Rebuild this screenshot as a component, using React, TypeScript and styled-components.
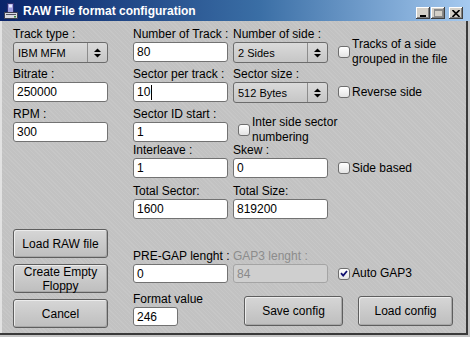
import React from "react";
import styled, { createGlobalStyle } from "styled-components";

const Global = createGlobalStyle`
  html, body { margin: 0; padding: 0; background: #c0c0c0; }
  body { font-family: "Liberation Sans", Arial, sans-serif; }
`;

const Window = styled.div`
  width: 470px;
  height: 337px;
  box-sizing: border-box;
  display: flex;
  flex-direction: column;
  overflow: hidden;
  background-color: #c2c2c2;
  background-image: repeating-linear-gradient(
    45deg,
    rgba(255, 255, 255, 0.08) 0 1px,
    transparent 1px 3px
  );
  box-shadow: inset -2px -2px 0 #c4c4c4, inset -4px -4px 0 #3a3a3a,
    inset 2px 0 0 #e2e2e2;
`;

const TitleBar = styled.div`
  flex: none;
  height: 21px;
  display: flex;
  align-items: center;
  padding: 0 7px 0 3px;
  background: linear-gradient(to right, #0a246a 0%, #3a6ea5 55%, #a6caf0 100%);
`;

const TitleText = styled.span`
  flex: 1;
  margin-left: 4px;
  color: #fff;
  font-weight: bold;
  font-size: 12px;
  white-space: nowrap;
`;

const CaptionButtons = styled.div`
  display: flex;
  align-self: flex-end;
  margin-bottom: 2px;
`;

const CaptionButton = styled.div<{ $gap?: number }>`
  width: 14px;
  height: 12px;
  margin-left: ${(p) => p.$gap ?? 1}px;
  background: #d4d0c8;
  box-shadow: inset -1px -1px 0 #404040, inset 1px 1px 0 #ffffff,
    inset -2px -2px 0 #808080;
  display: flex;
  align-items: center;
  justify-content: center;
`;

const Body = styled.div`
  flex: 1;
  display: flex;
  flex-direction: column;
  padding: 7px 0 0 13px;
`;

const TopGrid = styled.div`
  display: grid;
  grid-template-columns: 95px 25px 95px 5px 95px 10px 1fr;
  grid-template-rows: 40px 40px 36px 41px 34px;
  align-items: start;
`;

const Field = styled.div<{ $col?: number; $row?: number; $ml?: number; $w?: number }>`
  grid-column: ${(p) => p.$col ?? "auto"};
  grid-row: ${(p) => p.$row ?? "auto"};
  margin-left: ${(p) => p.$ml ?? 0}px;
  width: ${(p) => (p.$w ? `${p.$w}px` : "auto")};
  flex: none;
  display: flex;
  flex-direction: column;
  gap: 1px;
`;

const Label = styled.div<{ $disabled?: boolean }>`
  height: 13px;
  font-size: 12px;
  line-height: 13px;
  white-space: nowrap;
  color: ${(p) => (p.$disabled ? "#8c8c8c" : "#000")};
`;

const TextBox = styled.div<{ $w?: number; $h?: number; $disabled?: boolean }>`
  box-sizing: border-box;
  width: ${(p) => p.$w ?? 95}px;
  height: ${(p) => p.$h ?? 20}px;
  padding-left: 3px;
  display: flex;
  align-items: center;
  border: 1px solid ${(p) => (p.$disabled ? "#a4a4a4" : "#727272")};
  border-radius: 3px;
  background: ${(p) => (p.$disabled ? "#cfcfcf" : "#fff")};
  color: ${(p) => (p.$disabled ? "#8a8a8a" : "#000")};
  font-size: 12px;
  white-space: nowrap;
`;

const Caret = styled.span`
  display: inline-block;
  width: 1px;
  height: 15px;
  margin-left: 1px;
  background: #000;
`;

const SelectBox = styled.div`
  box-sizing: border-box;
  width: 95px;
  height: 21px;
  display: flex;
  border: 1px solid #6c6c6c;
  border-radius: 3px;
  background: linear-gradient(#dadada, #c6c6c6);
  font-size: 11px;
`;

const SelectValue = styled.div`
  flex: 1;
  padding-left: 4px;
  display: flex;
  align-items: center;
  white-space: nowrap;
`;

const SelectArrow = styled.div`
  width: 19px;
  border-left: 1px solid #8c8c8c;
  display: flex;
  align-items: center;
  justify-content: center;
`;

const CheckCell = styled.div<{ $col?: number; $row?: number; $ml?: number; $mt?: number; $h?: number }>`
  grid-column: ${(p) => p.$col ?? "auto"};
  grid-row: ${(p) => p.$row ?? "auto"};
  margin-left: ${(p) => p.$ml ?? 0}px;
  margin-top: ${(p) => p.$mt ?? 14}px;
  height: ${(p) => p.$h ?? 20}px;
  display: flex;
  align-items: center;
  gap: 2px;
`;

const CheckBox = styled.div`
  flex: none;
  box-sizing: border-box;
  width: 12px;
  height: 12px;
  border: 1px solid #6e6e6e;
  border-radius: 3px;
  background: linear-gradient(#ffffff, #e4e4e4);
  display: flex;
  align-items: center;
  justify-content: center;
`;

const CheckText = styled.div`
  font-size: 12px;
  line-height: 15px;
  white-space: nowrap;
`;

const Bottom = styled.div`
  display: flex;
  margin-top: 10px;
`;

const LeftButtons = styled.div`
  width: 95px;
  display: flex;
  flex-direction: column;
  gap: 6px;
`;

const PushButton = styled.button<{ $w?: number; $h?: number; $ml?: number }>`
  flex: none;
  box-sizing: border-box;
  width: ${(p) => p.$w ?? 95}px;
  height: ${(p) => p.$h ?? 29}px;
  margin: 0 0 0 ${(p) => p.$ml ?? 0}px;
  padding: 0;
  border: 1px solid #5e5e5e;
  border-radius: 3px;
  background: linear-gradient(#d6d6d6, #bebebe);
  box-shadow: inset 1px 1px 0 #ececec, inset -1px -1px 0 #a8a8a8;
  font-family: "Liberation Sans", Arial, sans-serif;
  font-size: 12px;
  line-height: 14px;
  color: #000;
`;

const RightPanel = styled.div`
  margin-left: 25px;
  padding-top: 21px;
  display: flex;
  flex-direction: column;
`;

const Row = styled.div`
  display: flex;
  align-items: flex-start;
`;

const ActionRow = styled.div`
  display: flex;
  align-items: flex-end;
  margin-top: 10px;
`;

const Arrows = () => (
  <svg width="7" height="10" viewBox="0 0 7 10">
    <polygon points="0,4 3.5,0.5 7,4" fill="#000" />
    <polygon points="0,6 7,6 3.5,9.5" fill="#000" />
  </svg>
);

const Select = ({ value }: { value: string }) => (
  <SelectBox>
    <SelectValue>{value}</SelectValue>
    <SelectArrow>
      <Arrows />
    </SelectArrow>
  </SelectBox>
);

const Check = ({ checked }: { checked?: boolean }) => (
  <CheckBox>
    {checked && (
      <svg width="8" height="7" viewBox="0 0 8 7">
        <path d="M1 3.2 L3.2 5.6 L7 1" stroke="#101070" strokeWidth="1.8" fill="none" />
      </svg>
    )}
  </CheckBox>
);

const AppIcon = () => (
  <svg width="16" height="16" viewBox="0 0 16 16">
    <rect x="4.5" y="0.5" width="6" height="9" fill="#9c9ce0" stroke="#303070" />
    <rect x="6" y="1.5" width="3" height="3" fill="#e8e8ff" />
    <path d="M1.5 9.5 H14.5 V15.5 H1.5 Z" fill="#d8d8e0" stroke="#404050" />
    <path d="M3 11.5 H13" stroke="#505060" />
    <rect x="11" y="13" width="2" height="1.5" fill="#3a8a3a" />
  </svg>
);

export default function App() {
  return (
    <>
      <Global />
      <Window>
        <TitleBar>
          <AppIcon />
          <TitleText>RAW File format configuration</TitleText>
          <CaptionButtons>
            <CaptionButton>
              <svg width="8" height="8" viewBox="0 0 8 8">
                <rect x="1" y="6" width="6" height="2" fill="#000" />
              </svg>
            </CaptionButton>
            <CaptionButton>
              <svg width="9" height="8" viewBox="0 0 9 8">
                <rect x="0.5" y="0.5" width="8" height="7" fill="none" stroke="#8a8a8a" />
                <rect x="0.5" y="0.5" width="8" height="1.5" fill="#8a8a8a" />
              </svg>
            </CaptionButton>
            <CaptionButton $gap={4}>
              <svg width="8" height="7" viewBox="0 0 8 7">
                <path d="M0.5 0 L7.5 7 M7.5 0 L0.5 7" stroke="#000" strokeWidth="1.6" />
              </svg>
            </CaptionButton>
          </CaptionButtons>
        </TitleBar>

        <Body>
          <TopGrid>
            <Field $col={1} $row={1}>
              <Label>Track type :</Label>
              <Select value="IBM MFM" />
            </Field>
            <Field $col={3} $row={1}>
              <Label>Number of Track :</Label>
              <TextBox>80</TextBox>
            </Field>
            <Field $col={5} $row={1}>
              <Label>Number of side :</Label>
              <Select value="2 Sides" />
            </Field>
            <CheckCell $col={7} $row={1}>
              <Check />
              <CheckText>
                Tracks of a side
                <br />
                grouped in the file
              </CheckText>
            </CheckCell>

            <Field $col={1} $row={2}>
              <Label>Bitrate :</Label>
              <TextBox>250000</TextBox>
            </Field>
            <Field $col={3} $row={2}>
              <Label>Sector per track :</Label>
              <TextBox>
                10
                <Caret />
              </TextBox>
            </Field>
            <Field $col={5} $row={2}>
              <Label>Sector size :</Label>
              <Select value="512 Bytes" />
            </Field>
            <CheckCell $col={7} $row={2}>
              <Check />
              <CheckText>Reverse side</CheckText>
            </CheckCell>

            <Field $col={1} $row={3}>
              <Label>RPM :</Label>
              <TextBox>300</TextBox>
            </Field>
            <Field $col={3} $row={3}>
              <Label>Sector ID start :</Label>
              <TextBox>1</TextBox>
            </Field>
            <CheckCell $col={5} $row={3} $ml={5} $mt={12}>
              <Check />
              <CheckText>
                Inter side sector
                <br />
                numbering
              </CheckText>
            </CheckCell>

            <Field $col={3} $row={4}>
              <Label>Interleave :</Label>
              <TextBox>1</TextBox>
            </Field>
            <Field $col={5} $row={4}>
              <Label>Skew :</Label>
              <TextBox>0</TextBox>
            </Field>
            <CheckCell $col={7} $row={4}>
              <Check />
              <CheckText>Side based</CheckText>
            </CheckCell>

            <Field $col={3} $row={5}>
              <Label>Total Sector:</Label>
              <TextBox>1600</TextBox>
            </Field>
            <Field $col={5} $row={5}>
              <Label>Total Size:</Label>
              <TextBox>819200</TextBox>
            </Field>
          </TopGrid>

          <Bottom>
            <LeftButtons>
              <PushButton>Load RAW file</PushButton>
              <PushButton>
                Create Empty
                <br />
                Floppy
              </PushButton>
              <PushButton>Cancel</PushButton>
            </LeftButtons>

            <RightPanel>
              <Row>
                <Field $w={95}>
                  <Label>PRE-GAP lenght :</Label>
                  <TextBox $h={19}>0</TextBox>
                </Field>
                <Field $ml={5} $w={95}>
                  <Label $disabled>GAP3 lenght :</Label>
                  <TextBox $h={19} $disabled>
                    84
                  </TextBox>
                </Field>
                <CheckCell $ml={10} $h={19}>
                  <Check checked />
                  <CheckText>Auto GAP3</CheckText>
                </CheckCell>
              </Row>
              <ActionRow>
                <Field $w={45}>
                  <Label>Format value</Label>
                  <TextBox $w={45} $h={19}>
                    246
                  </TextBox>
                </Field>
                <PushButton $w={99} $h={30} $ml={66}>
                  Save config
                </PushButton>
                <PushButton $w={95} $h={30} $ml={15}>
                  Load config
                </PushButton>
              </ActionRow>
            </RightPanel>
          </Bottom>
        </Body>
      </Window>
    </>
  );
}
